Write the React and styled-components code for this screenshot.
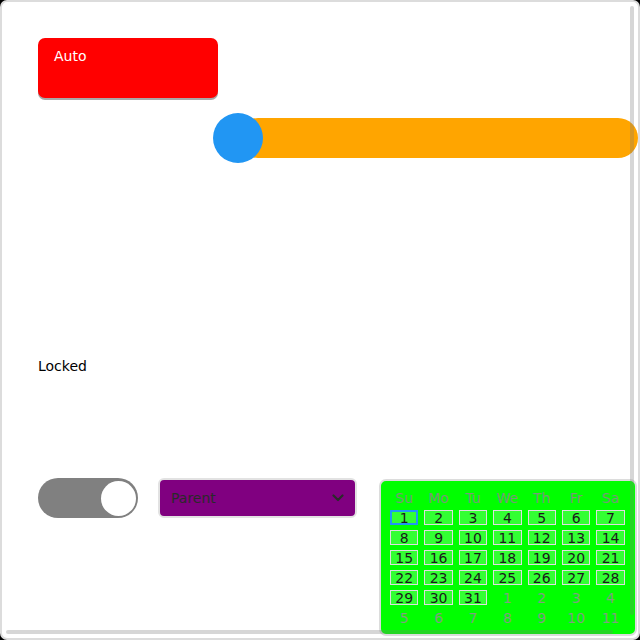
import React from 'react';
import styled, { createGlobalStyle } from 'styled-components';

const GlobalStyle = createGlobalStyle`
  html, body {
    margin: 0;
    padding: 0;
    background: #000;
  }
  body {
    font-family: 'DejaVu Sans', 'Liberation Sans', sans-serif;
  }
`;

const Frame = styled.div`
  position: relative;
  box-sizing: border-box;
  width: 640px;
  height: 640px;
  border: 2px solid #dcdcdc;
  border-radius: 7px;
  background: #fff;
  overflow: hidden;
`;

const Content = styled.div`
  display: flex;
  flex-direction: column;
  align-items: flex-start;
  padding: 36px 0 0 36px;
`;

const AutoButton = styled.button`
  box-sizing: border-box;
  width: 180px;
  height: 60px;
  padding: 10px 16px;
  border: none;
  border-radius: 7px;
  background: #ff0000;
  color: #fff;
  font-family: inherit;
  font-size: 14px;
  text-align: left;
  display: flex;
  align-items: flex-start;
  box-shadow: 0 2px 0 #a8a8a8;
`;

const Slider = styled.div`
  position: relative;
  display: flex;
  align-items: center;
  width: 425px;
  height: 50px;
  margin: 15px 0 0 175px;
  flex-shrink: 0;
`;

const Track = styled.div`
  flex: 1;
  height: 40px;
  margin-left: 25px;
  border-radius: 20px;
  background: #ffa500;
`;

const Thumb = styled.div`
  position: absolute;
  left: 0;
  top: 0;
  width: 50px;
  height: 50px;
  border-radius: 50%;
  background: #2196f3;
`;

const Label = styled.div`
  margin-top: 195px;
  font-size: 14px;
  line-height: 16px;
  color: #000;
`;

const BottomRow = styled.div`
  display: flex;
  align-items: flex-start;
  margin-top: 104px;
`;

const Toggle = styled.div`
  box-sizing: border-box;
  display: flex;
  justify-content: flex-end;
  align-items: center;
  width: 100px;
  height: 40px;
  padding: 0 2px;
  border-radius: 20px;
  background: #808080;
  flex-shrink: 0;
`;

const Knob = styled.div`
  width: 35px;
  height: 35px;
  border-radius: 50%;
  background: #fff;
`;

const Select = styled.div`
  box-sizing: border-box;
  display: flex;
  align-items: center;
  justify-content: space-between;
  width: 199px;
  height: 40px;
  margin-left: 20px;
  padding: 0 11px 0 11px;
  border: 2px solid #e2e2e2;
  border-radius: 6px;
  background: #800080;
  color: #2a2a2a;
  font-size: 14px;
  flex-shrink: 0;
`;

const Calendar = styled.div`
  box-sizing: border-box;
  width: 258px;
  margin: 1px 0 0 22px;
  padding: 9px 12px 9px 9px;
  border: 2px solid #dcdcdc;
  border-radius: 7px;
  background: #00ff00;
  flex-shrink: 0;
  display: grid;
  grid-template-columns: repeat(7, 28.4px);
  grid-auto-rows: 15px;
  column-gap: 6px;
  row-gap: 5px;
`;

const WeekDay = styled.div`
  display: flex;
  align-items: center;
  justify-content: center;
  font-size: 14px;
  color: #789878;
`;

const Day = styled.div`
  box-sizing: border-box;
  display: flex;
  align-items: center;
  justify-content: center;
  font-size: 14px;
  line-height: 14px;
  color: ${(p) => (p.$outside ? '#7f9f7f' : '#1a1a1a')};
  background: ${(p) => (p.$outside ? 'transparent' : 'rgba(255, 255, 255, 0.2)')};
  border: ${(p) =>
    p.$outside ? 'none' : p.$focused ? '2px solid #2196f3' : '1px solid #dedede'};
`;

const ScrollV = styled.div`
  position: absolute;
  right: 4px;
  top: 4px;
  width: 4px;
  height: 609px;
  border-radius: 2px;
  background: rgba(120, 120, 120, 0.3);
`;

const ScrollH = styled.div`
  position: absolute;
  left: 4px;
  bottom: 4px;
  height: 4px;
  width: 607px;
  border-radius: 2px;
  background: rgba(120, 120, 120, 0.3);
`;

const weekDays = ['Su', 'Mo', 'Tu', 'We', 'Th', 'Fr', 'Sa'];

const days = [
  ...Array.from({ length: 31 }, (_, i) => ({ n: i + 1, outside: false })),
  ...Array.from({ length: 11 }, (_, i) => ({ n: i + 1, outside: true })),
];

const Chevron = () => (
  <svg width="12" height="8" viewBox="0 0 12 8" fill="none">
    <path d="M1.5 1.5 L6 6 L10.5 1.5" stroke="#2a2a2a" strokeWidth="2.2" strokeLinecap="round" strokeLinejoin="round" />
  </svg>
);

const App = () => {
  return (
    <>
      <GlobalStyle />
      <Frame>
        <Content>
          <AutoButton>Auto</AutoButton>
          <Slider>
            <Track />
            <Thumb />
          </Slider>
          <Label>Locked</Label>
          <BottomRow>
            <Toggle>
              <Knob />
            </Toggle>
            <Select>
              <span>Parent</span>
              <Chevron />
            </Select>
            <Calendar>
              {weekDays.map((d) => (
                <WeekDay key={d}>{d}</WeekDay>
              ))}
              {days.map((d, i) => (
                <Day key={i} $outside={d.outside} $focused={i === 0}>
                  {d.n}
                </Day>
              ))}
            </Calendar>
          </BottomRow>
        </Content>
        <ScrollV />
        <ScrollH />
      </Frame>
    </>
  );
};

export default App;
